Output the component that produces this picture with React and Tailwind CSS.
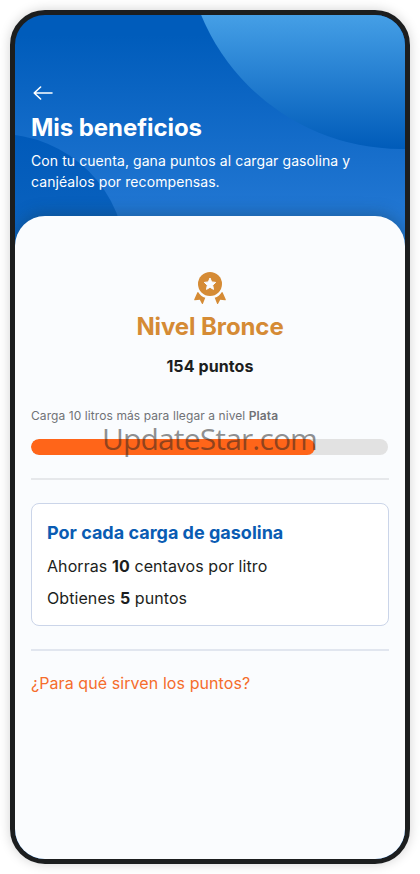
import React from 'react';

const level = {
  name: 'Nivel Bronce',
  points: 154,
  nextLevel: 'Plata',
  litersLeft: 10,
  progress: 79.6,
};

function BackArrow() {
  return (
    <svg className="w-5 h-4" viewBox="0 0 20 16" fill="none" stroke="currentColor" strokeWidth="1.6" strokeLinecap="round" strokeLinejoin="round">
      <path d="M19 8H1.2M7.6 2 1.2 8l6.4 6" />
    </svg>
  );
}

function Medal() {
  return (
    <svg className="w-8 h-8" viewBox="0 0 32 32" fill="currentColor">
      <circle cx="16" cy="12" r="12" />
      <path fill="#fafcff" stroke="#fafcff" strokeWidth="1" strokeLinejoin="round" d="m16 6 1.7 3.9 4 .5-3 2.8.8 4.2-3.5-2.1-3.5 2.1.8-4.2-3-2.8 4-.5Z" />
      <path d="M4.3 20.3C5.8 22.9 8.3 24.9 11.3 25.8L9 31.4Q8.5 32.4 7.8 31.4L5.8 27.8 1 28.3Q-.1 28.2.3 27.2L3.3 20.5Q3.8 19.6 4.3 20.3Z" />
      <path d="M27.7 20.3C26.2 22.9 23.7 24.9 20.7 25.8L23 31.4Q23.5 32.4 24.2 31.4L26.2 27.8 31 28.3Q32.1 28.2 31.7 27.2L28.7 20.5Q28.2 19.6 27.7 20.3Z" />
    </svg>
  );
}

function Header() {
  return (
    <header className="relative h-[201px] shrink-0 px-4 pt-[70px] text-white">
      <svg className="absolute left-0 top-0 w-[390px] h-[260px]" viewBox="0 0 390 260">
        <defs>
          <linearGradient id="bubble" gradientUnits="userSpaceOnUse" x1="0" y1="0" x2="0" y2="134">
            <stop offset="0" stopColor="#459fe6" />
            <stop offset="1" stopColor="#005bb9" />
          </linearGradient>
          <linearGradient id="hill" gradientUnits="userSpaceOnUse" x1="0" y1="118" x2="0" y2="230">
            <stop offset="0" stopColor="#005aba" />
            <stop offset="1" stopColor="#0c63bf" />
          </linearGradient>
        </defs>
        <circle cx="386" cy="-82" r="216" fill="url(#bubble)" />
        <circle cx="-16" cy="246" r="127" fill="url(#hill)" />
      </svg>
      <div className="relative">
        <button className="block ml-[1.5px]" aria-label="Volver"><BackArrow /></button>
        <h1 className="mt-[11px] text-2xl leading-8 font-bold tracking-[-0.05px]">Mis beneficios</h1>
        <p className="mt-[6px] w-[340px] text-sm leading-[21px] tracking-[0.08px]">
          Con tu cuenta, gana puntos al cargar gasolina y canjéalos por recompensas.
        </p>
      </div>
    </header>
  );
}

export default function App() {
  return (
    <div className="relative w-[420px] h-[874px] p-[10px] bg-white overflow-hidden font-['Inter',sans-serif]">
      <div className="w-[400px] h-[854px] rounded-[35px] border-[5px] border-[#1c1e1f] shadow-[0_0_12px_rgba(0,0,0,0.18)] overflow-hidden flex flex-col bg-[linear-gradient(#005cbb_0px,#005cbb_20px,#2277d3_200px,#2277d3_240px)]">
        <Header />
        <main className="relative flex-1 rounded-t-[30px] bg-[#fafcfe] px-4 pt-14 shadow-[0_-2px_16px_rgba(20,60,80,0.4)]">
          <div className="flex flex-col items-center text-[#d58b35]">
            <Medal />
            <h2 className="mt-[7px] text-2xl leading-8 font-bold tracking-[-0.1px]">{level.name}</h2>
            <p className="mt-[11px] text-base leading-6 font-bold tracking-[0.1px] text-[#1c1e20]">{level.points} puntos</p>
          </div>

          <p className="mt-[29px] text-xs leading-[18px] text-[#707276] tracking-[0.08px]">
            Carga {level.litersLeft} litros más para llegar a nivel <b className="font-semibold">{level.nextLevel}</b>
          </p>
          <div className="mt-[14px] h-4 rounded-full bg-[#e2e2e2] overflow-hidden mr-px">
            <div className="h-full rounded-full bg-[#ff6519]" style={{ width: `${level.progress}%` }} />
          </div>

          <hr className="mt-[23px] border-t-2 border-[#e6e8eb]" />

          <section className="mt-[23px] h-[123px] rounded-lg border border-[#cbd5e9] bg-white px-[15px] pt-[17px] text-base leading-6 tracking-[0.08px] text-[#1c1e20]">
            <h3 className="text-lg leading-6 font-bold tracking-normal text-[#0a5cb3]">Por cada carga de gasolina</h3>
            <p className="mt-[9px]">Ahorras <b className="font-bold">10</b> centavos por litro</p>
            <p className="mt-2">Obtienes <b className="font-bold">5</b> puntos</p>
          </section>

          <hr className="mt-[23px] border-t-2 border-[#e1e6ef]" />

          <a className="block mt-5 text-base leading-6 tracking-[0.08px] text-[#f56d2c]">¿Para qué sirven los puntos?</a>
        </main>
      </div>
      <span className="absolute left-[102px] top-[419px] text-[30px] leading-[40px] whitespace-nowrap tracking-[-0.85px] text-[#222]/50 font-['Open_Sans',sans-serif]">UpdateStar.com</span>
    </div>
  );
}
